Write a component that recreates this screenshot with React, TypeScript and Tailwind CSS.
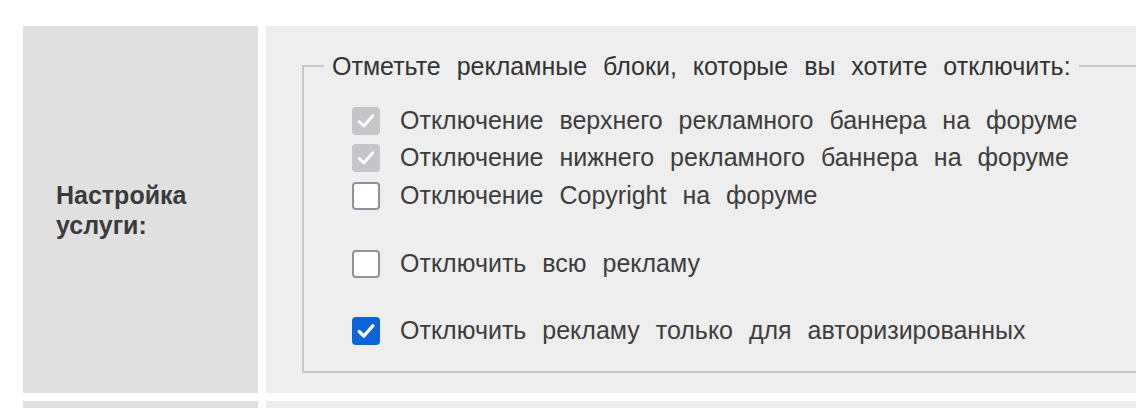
import type { ReactNode } from 'react'

type BoxState = 'locked' | 'off' | 'on'

function Box({ state }: { state: BoxState }) {
  if (state === 'off') {
    return (
      <span className="block w-[28px] h-[28px] shrink-0 rounded-[4px] border-2 border-[#8f8f9d] bg-white" />
    )
  }
  const bg = state === 'on' ? 'bg-[#0b63da]' : 'bg-[#c5c5ca]'
  return (
    <span className={`flex items-center justify-center w-[28px] h-[28px] shrink-0 rounded-[4px] ${bg}`}>
      <svg width="22" height="22" viewBox="0 0 22 22" fill="none">
        <path
          d="M4.2 11.6 L8.8 16 L17.8 5.8"
          stroke="white"
          strokeWidth={state === 'on' ? 3.4 : 2.8}
          strokeLinecap="round"
          strokeLinejoin="round"
        />
      </svg>
    </span>
  )
}

function Option({ state, children, className = '' }: { state: BoxState; children: ReactNode; className?: string }) {
  return (
    <label className={`flex items-center gap-[20px] h-[38px] ${className}`}>
      <Box state={state} />
      <span className="whitespace-nowrap">{children}</span>
    </label>
  )
}

export default function App() {
  return (
    <div
      className="w-[1136px] h-[408px] overflow-hidden bg-white text-[#333] text-[25px]"
      style={{ fontFamily: '"Liberation Sans", Arial, sans-serif', wordSpacing: '9px' }}
    >
      <div className="grid grid-cols-[235px_920px] grid-rows-[367px_60px] gap-[8px] pt-[26px] pl-[23px]">
        <div className="bg-[#e0e0e0] flex items-center pl-[33px]">
          <div className="font-bold leading-[30px] text-[#3a3a3a]" style={{ wordSpacing: 'normal' }}>
            Настройка
            <br />
            услуги:
          </div>
        </div>

        <div className="bg-[#eeeeee] pt-[25px] pl-[36px]">
          <fieldset className="w-[900px] h-[322px] border-2 border-[#c8c8c8] pl-[20px] pt-[21px]">
            <legend className="px-[8px] leading-[30px]">
              Отметьте рекламные блоки, которые вы хотите отключить:
            </legend>
            <div className="ml-[28px] text-[#3d3d3d]">
              <Option state="locked">Отключение верхнего рекламного баннера на форуме</Option>
              <Option state="locked" className="-mt-[1px]">Отключение нижнего рекламного баннера на форуме</Option>
              <Option state="off">Отключение Copyright на форуме</Option>
              <Option state="off" className="mt-[30px]">Отключить всю рекламу</Option>
              <Option state="on" className="mt-[29px]">Отключить рекламу только для авторизированных</Option>
            </div>
          </fieldset>
        </div>

        <div className="bg-[#e0e0e0]" />
        <div className="bg-[#eeeeee]" />
      </div>
    </div>
  )
}
